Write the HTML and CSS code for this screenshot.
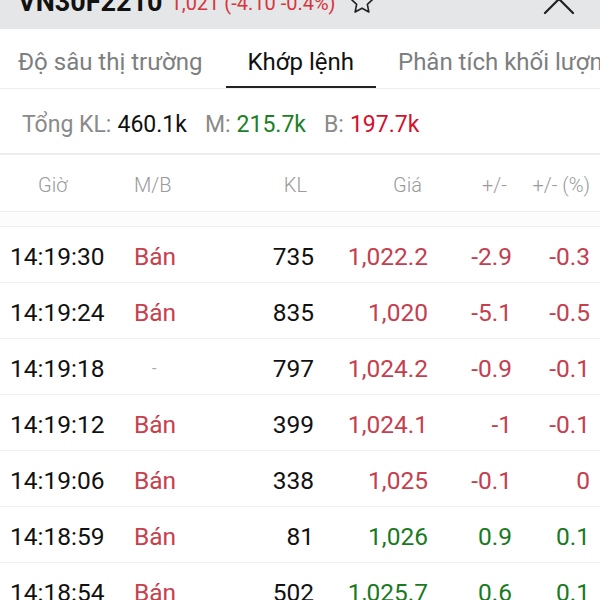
FILE: index.html
```html
<!DOCTYPE html>
<html lang="vi">
<head>
    <meta charset="UTF-8">
    <meta name="viewport" content="width=device-width, initial-scale=1.0">
    <title>VN30F2210 - Khớp lệnh</title>
    <link rel="stylesheet" href="styles.css">
</head>
<body>

    <div class="topbar">
        <div class="topbar-inner">
            <span class="symbol">VN30F2210</span>
            <span class="quote">1,021 (-4.10 -0.4%)</span>
            <svg class="star" width="28" height="28" viewBox="0 0 24 24">
                <path d="M12 2.5l2.9 6.1 6.6.8-4.9 4.6 1.3 6.6L12 17.3l-5.9 3.3 1.3-6.6-4.9-4.6 6.6-.8z" fill="none" stroke="#222" stroke-width="1.4" stroke-linejoin="round"/>
            </svg>
            <svg class="close" width="34" height="34" viewBox="0 0 34 34">
                <path d="M3 3l28 28M31 3L3 31" stroke="#222" stroke-width="2.2" stroke-linecap="round"/>
            </svg>
        </div>
    </div>

    <div class="tabs">
        <div class="tab tab-first">Độ sâu thị trường</div>
        <div class="tab active">Khớp lệnh</div>
        <div class="tab">Phân tích khối lượng</div>
    </div>

    <div class="summary">
        <span class="label">Tổng KL:</span><span class="val">460.1k</span>
        <span class="label">M:</span><span class="val up">215.7k</span>
        <span class="label">B:</span><span class="val down">197.7k</span>
    </div>

    <div class="grid thead">
        <div class="h-time">Giờ</div>
        <div class="h-side">M/B</div>
        <div class="h-kl">KL</div>
        <div class="h-price">Giá</div>
        <div class="h-chg">+/-</div>
        <div class="h-pct">+/- (%)</div>
    </div>
    <div class="spacer"></div>

    <div id="rows"></div>

    <script>
        const trades = [
            ['14:19:30', 'Bán', 735, '1,022.2', '-2.9', '-0.3', 'red'],
            ['14:19:24', 'Bán', 835, '1,020', '-5.1', '-0.5', 'red'],
            ['14:19:18', '-', 797, '1,024.2', '-0.9', '-0.1', 'red'],
            ['14:19:12', 'Bán', 399, '1,024.1', '-1', '-0.1', 'red'],
            ['14:19:06', 'Bán', 338, '1,025', '-0.1', '0', 'red'],
            ['14:18:59', 'Bán', 81, '1,026', '0.9', '0.1', 'green'],
            ['14:18:54', 'Bán', 502, '1,025.7', '0.6', '0.1', 'green']
        ];

        const rows = document.getElementById('rows');
        trades.forEach(t => {
            const row = document.createElement('div');
            row.className = 'grid trade';
            const sideClass = t[1] === '-' ? 'side none' : 'side';
            row.innerHTML = `
                <div class="time">${t[0]}</div>
                <div class="${sideClass}">${t[1]}</div>
                <div class="kl">${t[2]}</div>
                <div class="num ${t[6]}">${t[3]}</div>
                <div class="num ${t[6]}">${t[4]}</div>
                <div class="num ${t[6]}">${t[5]}</div>`;
            rows.appendChild(row);
        });
    </script>
</body>
</html>
```

FILE: styles.css
```css
body {
    margin: 0;
    font-family: Roboto, "Noto Sans", Arial, sans-serif;
    background: #fff;
    color: #111;
    width: 600px;
    height: 600px;
    overflow: hidden;
}

/* grey title bar, scrolled partly off the top */
.topbar {
    height: 29px;
    background: #e5e6e8;
    overflow: hidden;
}

.topbar-inner {
    display: flex;
    align-items: center;
    height: 30px;
    margin-top: -14px;
    padding-left: 18px;
}

.symbol {
    font-size: 27px;
    font-weight: bold;
    color: #111;
    margin-top: 2px;
}

.quote {
    font-size: 20px;
    color: #d7353d;
    margin-left: 8px;
    margin-top: 4px;
}

.star { margin-left: 12px; margin-top: 2px; }
.close { margin-left: auto; margin-right: 24px; margin-top: -4px; }

.tabs {
    display: flex;
    height: 59px;
    border-bottom: 1px solid #eeeeee;
    white-space: nowrap;
    overflow: hidden;
}

.tab {
    font-size: 24px;
    color: #7d7e80;
    padding: 8px 22px 0;
    display: flex;
    align-items: center;
    border-bottom: 2px solid transparent;
}

.tab-first { padding-left: 18px; padding-right: 23px; }

.tab.active {
    color: #111;
    border-bottom-color: #222;
}

.summary {
    height: 57px;
    padding: 7px 0 0 22px;
    display: flex;
    align-items: center;
    gap: 0 6px;
    font-size: 23px;
    border-bottom: 2px solid #ececec;
}

.summary .label { color: #8a8a8a; }
.summary .val { color: #111; margin-right: 12px; }
.summary .up { color: #1b7f25; }
.summary .down { color: #d4102c; }

.grid {
    display: grid;
    grid-template-columns: 124px 80px 100px 114px 84px 78px;
    padding: 0 10px;
    align-items: center;
}

.thead {
    height: 53px;
    padding-top: 3px;
    font-size: 20px;
    font-weight: 300;
    color: #9a9a9a;
    border-bottom: 1px solid #eeeeee;
}

.h-time { padding-left: 28px; }
.h-kl { text-align: right; padding-right: 7px; }
.h-price { text-align: right; padding-right: 6px; }
.h-chg { text-align: right; padding-right: 5px; }
.h-pct { text-align: right; }

.spacer {
    height: 14px;
    background: #fcfcfc;
    border-bottom: 1px solid #eeeeee;
}

.trade {
    height: 51px;
    padding-top: 4px;
    font-size: 24.5px;
    border-bottom: 1px solid #f0f0f0;
}

.time { color: #111; }
.side { color: #c8404c; }
.side.none { color: #aaa; font-size: 16px; padding-left: 18px; }
.kl { text-align: right; color: #111; }
.num { text-align: right; }
.red { color: #c4404f; }
.green { color: #197a1f; }
```
